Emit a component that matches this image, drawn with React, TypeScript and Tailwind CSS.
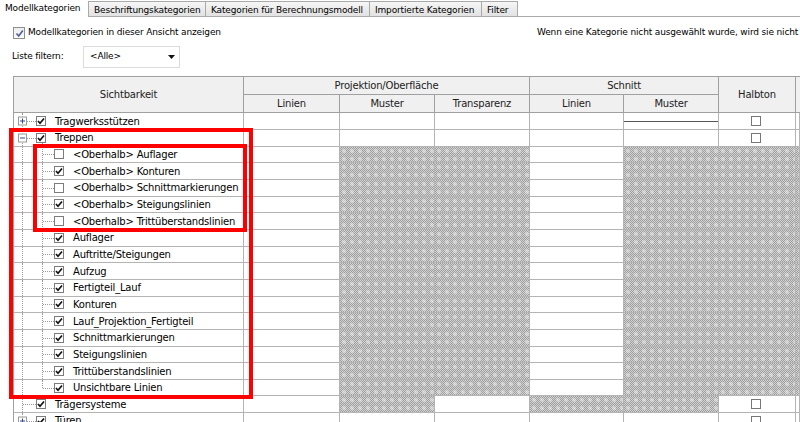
import React from 'react'

type Cell = 'w' | 'h' | 'cb' | 'ln'

interface Row {
  label: string
  level: 0 | 1
  checked: boolean
  expander?: 'plus' | 'minus'
  last?: boolean
  cells: Cell[]
}

const COLS = 'grid grid-cols-[230px_96px_95px_95px_94px_95px_77px_1fr]'
const HATCH =
  'bg-[radial-gradient(circle,rgba(235,235,235,0.55)_1.5px,transparent_2.5px),repeating-conic-gradient(#9e9e9e_0_25%,#d2d2d2_0_50%)] bg-[length:8px_8px,2px_2px]'

const child: Cell[] = ['w', 'h', 'h', 'w', 'h', 'h', 'h']

const rows: Row[] = [
  { label: 'Tragwerksstützen', level: 0, checked: true, expander: 'plus', cells: ['w', 'w', 'w', 'w', 'ln', 'cb', 'w'] },
  { label: 'Treppen', level: 0, checked: true, expander: 'minus', cells: ['w', 'w', 'w', 'w', 'w', 'cb', 'w'] },
  { label: '<Oberhalb> Auflager', level: 1, checked: false, cells: child },
  { label: '<Oberhalb> Konturen', level: 1, checked: true, cells: child },
  { label: '<Oberhalb> Schnittmarkierungen', level: 1, checked: false, cells: child },
  { label: '<Oberhalb> Steigungslinien', level: 1, checked: true, cells: child },
  { label: '<Oberhalb> Trittüberstandslinien', level: 1, checked: false, cells: child },
  { label: 'Auflager', level: 1, checked: true, cells: child },
  { label: 'Auftritte/Steigungen', level: 1, checked: true, cells: child },
  { label: 'Aufzug', level: 1, checked: true, cells: child },
  { label: 'Fertigteil_Lauf', level: 1, checked: true, cells: child },
  { label: 'Konturen', level: 1, checked: true, cells: child },
  { label: 'Lauf_Projektion_Fertigteil', level: 1, checked: true, cells: child },
  { label: 'Schnittmarkierungen', level: 1, checked: true, cells: child },
  { label: 'Steigungslinien', level: 1, checked: true, cells: child },
  { label: 'Trittüberstandslinien', level: 1, checked: true, cells: child },
  { label: 'Unsichtbare Linien', level: 1, checked: true, last: true, cells: child },
  { label: 'Trägersysteme', level: 0, checked: true, cells: ['w', 'h', 'w', 'h', 'h', 'cb', 'w'] },
  { label: 'Türen', level: 0, checked: true, expander: 'plus', cells: ['w', 'w', 'w', 'w', 'w', 'cb', 'w'] },
]

function TreeCheck({ checked }: { checked: boolean }) {
  return (
    <div className="w-[10px] h-[10px] shrink-0 border border-[#7c7c7c] bg-white flex items-center justify-center">
      {checked && (
        <svg width="8" height="8" viewBox="0 0 8 8">
          <path d="M1 4 L3 6.2 L7 1.5" fill="none" stroke="#111" strokeWidth="1.7" />
        </svg>
      )}
    </div>
  )
}

function Expander({ kind }: { kind: 'plus' | 'minus' }) {
  return (
    <div className="absolute left-[4px] top-1/2 -translate-y-1/2 w-[9px] h-[9px] border border-[#9a9a9a] bg-white flex items-center justify-center">
      <div className="relative w-[5px] h-[5px]">
        <div className="absolute left-0 right-0 top-[2px] h-px bg-[#2a4a9a]" />
        {kind === 'plus' && <div className="absolute top-0 bottom-0 left-[2px] w-px bg-[#2a4a9a]" />}
      </div>
    </div>
  )
}

function NameCell({ row }: { row: Row }) {
  const dotV = 'absolute w-0 border-l border-dotted border-[#9a9a9a]'
  const dotH = 'absolute h-0 border-t border-dotted border-[#9a9a9a] top-1/2'
  return (
    <div className="relative h-full border-r border-b border-[#b4b4b4] flex items-center">
      <div className={`${dotV} left-[8px] top-0 bottom-0`} />
      {row.level === 0 && row.expander && <div className={`${dotH} left-[13px] w-[9px]`} />}
      {row.level === 0 && !row.expander && <div className={`${dotH} left-[9px] w-[13px]`} />}
      {row.level === 0 && row.expander && <Expander kind={row.expander} />}
      {row.expander === 'minus' && <div className={`${dotV} left-[28px] top-[calc(50%+5px)] bottom-0`} />}
      {row.level === 1 && (
        <>
          <div className={`${dotV} left-[28px] top-0 ${row.last ? 'h-1/2' : 'bottom-0'}`} />
          <div className={`${dotH} left-[29px] w-[11px]`} />
        </>
      )}
      <div className={`flex items-center gap-[9px] ${row.level === 0 ? 'pl-[22px]' : 'pl-[40px]'}`}>
        <TreeCheck checked={row.checked} />
        <span className="text-[10px] tracking-[-0.2px] text-black whitespace-nowrap">{row.label}</span>
      </div>
    </div>
  )
}

function DataCell({ kind }: { kind: Cell }) {
  return (
    <div
      className={`h-full border-r border-b border-[#b4b4b4] flex items-center justify-center ${
        kind === 'h' ? HATCH : 'bg-white'
      }`}
    >
      {kind === 'cb' && <div className="w-[10px] h-[10px] border border-[#777] bg-white -ml-[3px]" />}
      {kind === 'ln' && <div className="w-full h-px bg-[#555]" />}
    </div>
  )
}

const tabs = [
  { label: 'Beschriftungskategorien', w: 'w-[117px]' },
  { label: 'Kategorien für Berechnungsmodell', w: 'w-[164px]' },
  { label: 'Importierte Kategorien', w: 'w-[112px]' },
  { label: 'Filter', w: 'w-[37px] border-r' },
]

export default function App() {
  return (
    <div className="relative w-[800px] h-[422px] overflow-hidden bg-white font-['DejaVu_Sans',sans-serif] text-black">
      {/* tabs */}
      <div className="flex h-[17px] text-[9px] tracking-[-0.15px]">
        <div className="w-[88px] pl-[5px] pt-[2px] bg-white whitespace-nowrap">Modellkategorien</div>
        {tabs.map((t) => (
          <div
            key={t.label}
            className={`${t.w} mt-[1px] pl-[5px] pt-[2px] whitespace-nowrap border-l border-t border-b border-[#a9a9a9] bg-linear-to-b from-[#f6f6f6] to-[#e2e2e2]`}
          >
            {t.label}
          </div>
        ))}
        <div className="flex-1 border-b border-[#a9a9a9]" />
      </div>

      {/* options */}
      <div className="mt-[10px] h-[12px] flex items-center text-[9px] tracking-[-0.15px] whitespace-nowrap">
        <div className="w-[537px] shrink-0 flex items-center pl-[13px] gap-[3px]">
          <div className="w-[12px] h-[12px] border border-[#8e8f8f] bg-linear-to-b from-[#ededed] to-[#fafafa] flex items-center justify-center">
            <svg width="9" height="9" viewBox="0 0 9 9">
              <path d="M1.5 4.5 L3.7 7 L7.8 1.5" fill="none" stroke="#4b5d94" strokeWidth="1.6" />
            </svg>
          </div>
          <span>Modellkategorien in dieser Ansicht anzeigen</span>
        </div>
        <span>Wenn eine Kategorie nicht ausgewählt wurde, wird sie nicht angezeigt.</span>
      </div>

      <div className="mt-[7px] h-[22px] flex items-center text-[9px] tracking-[-0.15px] pl-[12px]">
        <span className="w-[71px]">Liste filtern:</span>
        <div className="w-[97px] h-[22px] border border-[#dcdcdc] bg-white flex items-center justify-between pl-[6px] pr-[4px]">
          <span>&lt;Alle&gt;</span>
          <svg width="7" height="4" viewBox="0 0 7 4">
            <path d="M0 0 H7 L3.5 4 Z" fill="#111" />
          </svg>
        </div>
      </div>

      {/* table */}
      <div className="mt-[8px] ml-[13px] w-[787px] border-l border-t border-[#a0a0a0] text-[10px] tracking-[-0.2px]">
        <div className={`${COLS} grid-rows-[18px_18.33px] bg-[#f0f0f0] text-[#222]`}>
          <div className="row-span-2 border-r border-b border-[#a0a0a0] flex items-center justify-center">Sichtbarkeit</div>
          <div className="col-span-3 border-r border-b border-[#a0a0a0] flex items-center justify-center">Projektion/Oberfläche</div>
          <div className="col-span-2 border-r border-b border-[#a0a0a0] flex items-center justify-center">Schnitt</div>
          <div className="row-span-2 border-r border-b border-[#a0a0a0] flex items-center justify-center">Halbton</div>
          <div className="row-span-2 border-b border-[#a0a0a0]" />
          <div className="border-r border-b border-[#a0a0a0] flex items-center justify-center">Linien</div>
          <div className="border-r border-b border-[#a0a0a0] flex items-center justify-center">Muster</div>
          <div className="border-r border-b border-[#a0a0a0] flex items-center justify-center">Transparenz</div>
          <div className="border-r border-b border-[#a0a0a0] flex items-center justify-center">Linien</div>
          <div className="border-r border-b border-[#a0a0a0] flex items-center justify-center">Muster</div>
        </div>

        {rows.map((row, i) => (
          <div key={i} className={`${COLS} h-[16.67px]`}>
            <NameCell row={row} />
            {row.cells.map((c, j) => (
              <DataCell key={j} kind={c} />
            ))}
          </div>
        ))}
      </div>

      {/* red annotation boxes */}
      <div className="absolute left-[9px] top-[128px] w-[244px] h-[271px] border-[4px] border-[#ff0000]" />
      <div className="absolute left-[33px] top-[144px] w-[214px] h-[88px] border-[4px] border-[#ff0000]" />
    </div>
  )
}
